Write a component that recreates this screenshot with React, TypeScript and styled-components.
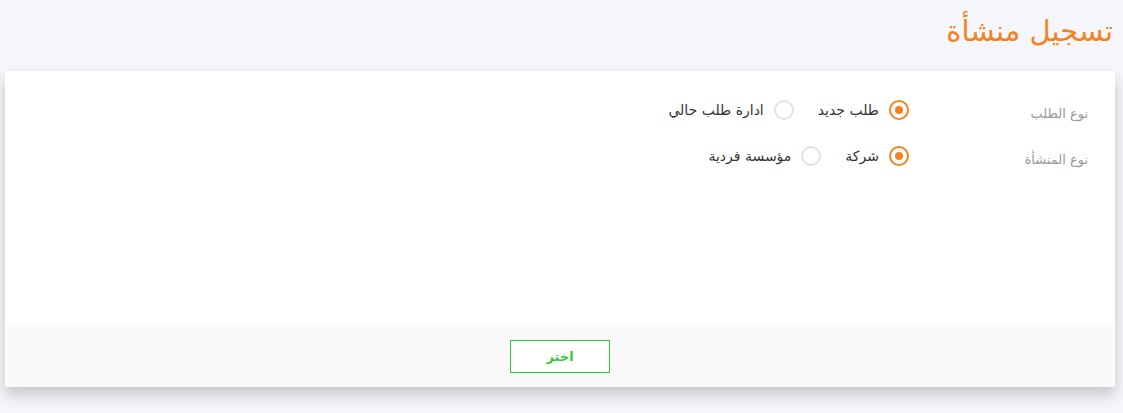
import React, { useState } from 'react';
import styled, { createGlobalStyle } from 'styled-components';

const GlobalStyle = createGlobalStyle`
  body {
    margin: 0;
    background: #f5f6fa;
    font-family: "DejaVu Sans", "Noto Sans", sans-serif;
  }
`;

const Page = styled.div`
  direction: rtl;
  padding: 12px 8px 30px 5px;
`;

const Title = styled.h1`
  margin: 0 0 20px 0;
  font-size: 29px;
  font-weight: normal;
  color: #f5821f;
  line-height: 39px;
  padding-right: 2px;
`;

const Card = styled.div`
  background: #fff;
  box-shadow: 0 8px 14px rgba(0, 0, 0, 0.2);
`;

const Body = styled.div`
  height: 255px;
  padding: 16px 27px 0 0;
  box-sizing: border-box;
`;

const Row = styled.div`
  display: flex;
  align-items: center;
  height: 46px;
`;

const Label = styled.div`
  width: 179px;
  font-size: 13px;
  color: #999;
  padding-top: 7px;
`;

const Options = styled.div`
  display: flex;
  align-items: center;
`;

const Option = styled.label`
  display: flex;
  align-items: center;
  gap: 10px;
  margin-left: 24px;
  font-size: 14px;
  color: #333;
  cursor: pointer;
`;

const Radio = styled.span<{ checked: boolean }>`
  width: 20px;
  height: 20px;
  box-sizing: border-box;
  border-radius: 50%;
  border: 2px solid ${p => (p.checked ? '#f5821f' : '#e2e2e2')};
  display: flex;
  align-items: center;
  justify-content: center;
  &::after {
    content: '';
    width: 8px;
    height: 8px;
    border-radius: 50%;
    background: ${p => (p.checked ? '#f5821f' : 'transparent')};
  }
`;

const Footer = styled.div`
  background: #fafafa;
  height: 61px;
  display: flex;
  align-items: center;
  justify-content: center;
`;

const Button = styled.button`
  width: 100px;
  height: 33px;
  background: #fff;
  border: 1px solid #33cc33;
  color: #33cc33;
  font-family: "DejaVu Sans", sans-serif;
  font-weight: bold;
  font-size: 13px;
  cursor: pointer;
`;

const groups = [
  { key: 'request', label: 'نوع الطلب', options: ['طلب جديد', 'ادارة طلب حالي'] },
  { key: 'type', label: 'نوع المنشأة', options: ['شركة', 'مؤسسة فردية'] },
];

export default function App() {
  const [values, setValues] = useState<Record<string, number>>({ request: 0, type: 0 });

  return (
    <>
      <GlobalStyle />
      <Page>
        <Title>تسجيل منشأة</Title>
        <Card>
          <Body>
            {groups.map(g => (
              <Row key={g.key}>
                <Label>{g.label}</Label>
                <Options>
                  {g.options.map((o, i) => (
                    <Option key={o} onClick={() => setValues({ ...values, [g.key]: i })}>
                      <Radio checked={values[g.key] === i} />
                      {o}
                    </Option>
                  ))}
                </Options>
              </Row>
            ))}
          </Body>
          <Footer>
            <Button>اختر</Button>
          </Footer>
        </Card>
      </Page>
    </>
  );
}
